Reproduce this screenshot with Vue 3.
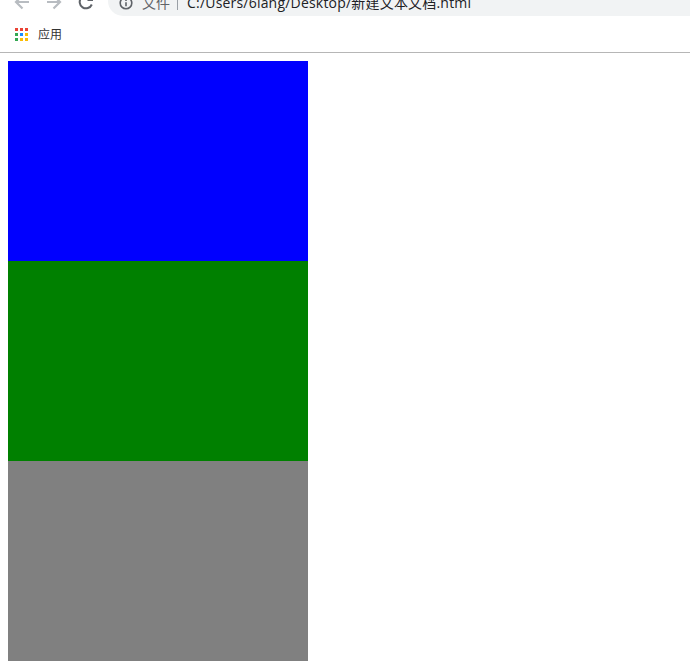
<script setup>
const dots = ['#ea4335','#ea4335','#ea4335','#34a853','#1a8cff','#fbbc04','#34a853','#fbbc04','#fbbc04']
</script>

<template>
  <div class="page">
    <header class="toolbar">
      <div class="nav">
        <svg class="icon back" viewBox="0 0 16 16" width="16" height="16"><path d="M15 8H2.500M8.500 1.500 2 8l6.500 6.500" fill="none" stroke="#b8bcc1" stroke-width="2.200"/></svg>
        <svg class="icon forward" viewBox="0 0 16 16" width="16" height="16"><path d="M1 8h12.500M7.500 1.500 14 8l-6.500 6.500" fill="none" stroke="#b8bcc1" stroke-width="2.200"/></svg>
        <svg class="icon reload" viewBox="0 0 16 16" width="16" height="16"><path d="M13.800 10.500A6.300 6.300 0 1 1 13 4.200" fill="none" stroke="#5f6368" stroke-width="2"/><path d="M15 1v6H9z" fill="#5f6368"/></svg>
      </div>
      <div class="omnibox">
        <svg class="info" viewBox="0 0 14 14" width="14" height="14"><circle cx="7" cy="7" r="5.800" fill="none" stroke="#5f6368" stroke-width="1.600"/><path d="M7 6.200v4M7 3.600v1.500" stroke="#5f6368" stroke-width="1.600"/></svg>
        <span class="scheme">文件</span>
        <span class="sep"></span>
        <span class="url">C:/Users/6lang/Desktop/新建文本文档.html</span>
      </div>
    </header>
    <nav class="bookmarks">
      <span class="apps"><i v-for="(c, i) in dots" :key="i" :style="{ background: c }"></i></span>
      <span class="label">应用</span>
    </nav>
    <main class="content">
      <div class="box blue"></div>
      <div class="box green"></div>
      <div class="box gray"></div>
    </main>
  </div>
</template>

<style scoped>
.page {
  font-family: "Open Sans", "Noto Sans CJK SC", sans-serif;
  background: #fff;
}
.toolbar {
  display: flex;
  align-items: center;
  height: 30px;
  margin-top: -14px;
}
.nav {
  display: flex;
  align-items: center;
  width: 108px;
  flex: none;
  margin-top: 2px;
  padding-left: 14px;
  box-sizing: border-box;
  gap: 16px;
}
.icon { flex: none; }
.omnibox {
  flex: 1;
  height: 30px;
  display: flex;
  align-items: center;
  background: #f1f3f4;
  border-radius: 15px 0 0 15px;
  padding-left: 11px;
}
.info { flex: none; margin-top: 4px; }
.scheme {
  margin-left: 9px;
  margin-top: 4px;
  font-size: 14px;
  color: #5f6368;
  line-height: 20px;
}
.sep {
  width: 1px;
  height: 16px;
  margin: 2px 9px 0 7px;
  background: #9aa0a6;
}
.url {
  margin-top: 4px;
  font-size: 14px;
  letter-spacing: 0.2px;
  color: #202124;
  line-height: 20px;
  white-space: nowrap;
}
.bookmarks {
  display: flex;
  align-items: center;
  height: 36px;
  padding-left: 15px;
  border-bottom: 1px solid #b6b6b6;
  gap: 10px;
}
.apps {
  display: grid;
  grid-template-columns: repeat(3, 3px);
  grid-auto-rows: 3px;
  gap: 2px;
}
.apps i { display: block; }
.label {
  font-size: 12px;
  color: #333;
}
.content {
  padding: 8px 0 11px 8px;
}
.box {
  width: 300px;
  height: 200px;
}
.blue { background: #00f; }
.green { background: #008000; }
.gray { background: #808080; }
</style>
